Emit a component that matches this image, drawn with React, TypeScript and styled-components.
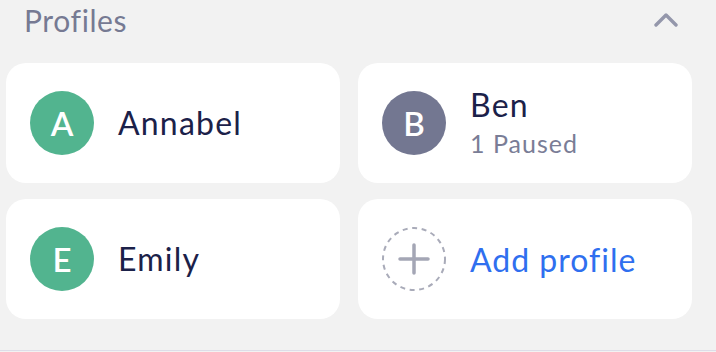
import styled, { createGlobalStyle } from 'styled-components';

const GlobalStyle = createGlobalStyle`
  html, body {
    margin: 0;
    padding: 0;
    background: #f2f2f2;
  }
  body {
    font-family: Lato, 'Liberation Sans', sans-serif;
  }
`;

type Profile = {
  initial: string;
  name: string;
  color: string;
  status?: string;
};

const profiles: Profile[] = [
  { initial: 'A', name: 'Annabel', color: '#52b48f' },
  { initial: 'B', name: 'Ben', color: '#737791', status: '1 Paused' },
  { initial: 'E', name: 'Emily', color: '#52b48f' },
];

const App = () => (
  <>
    <GlobalStyle />
    <Section>
      <Header>
        <Title>Profiles</Title>
        <Chevron viewBox="0 0 24 14" aria-hidden>
          <path d="M2 12L12 2l10 10" />
        </Chevron>
      </Header>
      <Grid>
        {profiles.map((p) => (
          <Card key={p.name}>
            <Avatar $color={p.color}>{p.initial}</Avatar>
            <Info>
              <Name>{p.name}</Name>
              {p.status && <Status>{p.status}</Status>}
            </Info>
          </Card>
        ))}
        <Card as="button">
          <AddCircle viewBox="0 0 64 64" aria-hidden>
            <circle className="ring" cx="32" cy="32" r="31" />
            <path className="plus" d="M32 18v28M18 32h28" />
          </AddCircle>
          <AddLabel>Add profile</AddLabel>
        </Card>
      </Grid>
    </Section>
  </>
);

const Section = styled.section`
  width: 716px;
  height: 350px;
  border-bottom: 1px solid #dedde8;
  box-sizing: content-box;
`;

const Header = styled.div`
  display: flex;
  align-items: center;
  justify-content: space-between;
  height: 40px;
  padding: 0 38px 0 24px;
  margin-bottom: 23px;
`;

const Title = styled.h2`
  margin: 0;
  font-size: 30px;
  font-weight: 400;
  letter-spacing: 0.6px;
  color: #767a93;
  line-height: 40px;
`;

const Chevron = styled.svg`
  width: 24px;
  height: 14px;
  fill: none;
  stroke: #9497ab;
  stroke-width: 3.4;
  stroke-linecap: round;
  stroke-linejoin: round;
`;

const Grid = styled.div`
  display: grid;
  grid-template-columns: 334px 334px;
  grid-auto-rows: 120px;
  column-gap: 18px;
  row-gap: 16px;
  padding-left: 6px;
`;

const Card = styled.div`
  display: flex;
  align-items: center;
  gap: 24px;
  padding: 0 24px;
  background: #ffffff;
  border: none;
  border-radius: 20px;
  font: inherit;
  text-align: left;
  cursor: pointer;
`;

const Avatar = styled.div<{ $color: string }>`
  flex: none;
  width: 64px;
  height: 64px;
  border-radius: 50%;
  background: ${(p) => p.$color};
  color: #ffffff;
  display: flex;
  align-items: center;
  justify-content: center;
  font-size: 33px;
  font-weight: 600;
`;

const Info = styled.div`
  display: flex;
  flex-direction: column;
  gap: 6px;
`;

const Name = styled.div`
  font-size: 32px;
  letter-spacing: 1.2px;
  color: #1b2149;
  line-height: 34px;
`;

const Status = styled.div`
  font-size: 25px;
  letter-spacing: 1px;
  color: #7a7d96;
  line-height: 30px;
`;

const AddCircle = styled.svg`
  flex: none;
  width: 64px;
  height: 64px;
  fill: none;
  .ring {
    stroke: #a9abb9;
    stroke-width: 2;
    stroke-dasharray: 5 4.6;
  }
  .plus {
    stroke: #a4a6b5;
    stroke-width: 3.5;
    stroke-linecap: round;
  }
`;

const AddLabel = styled.span`
  font-size: 32px;
  letter-spacing: 1px;
  color: #2f6fef;
`;

export default App;
